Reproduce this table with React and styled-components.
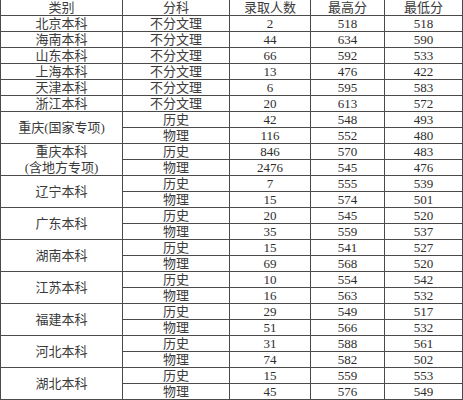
import React from 'react';
import styled, { createGlobalStyle } from 'styled-components';

const GlobalStyle = createGlobalStyle`
  html, body {
    margin: 0;
    padding: 0;
    background: #ffffff;
    overflow: hidden;
  }
`;

// lines are the grid background showing through 1px gaps
const Sheet = styled.div`
  display: grid;
  grid-template-columns: 121px 106px 80px 73px 77px;
  grid-template-rows: 15px;
  grid-auto-rows: 15px;
  gap: 1px;
  width: 461px;
  padding: 0 1px 1px 1px;
  background: #4a4a4a;
  font-family: "Liberation Serif", "Noto Sans CJK SC", serif;
  font-size: 13px;
`;

const Cell = styled.div`
  display: flex;
  flex-direction: column;
  align-items: center;
  justify-content: center;
  background: #ffffff;
  line-height: ${p => (p.$tall ? '16px' : '15px')};
  white-space: nowrap;
  color: ${p => (p.$num ? '#2e2e2e' : '#3a3a3a')};
  grid-row: ${p => (p.$span ? `span ${p.$span}` : 'auto')};
`;

const headers = ['类别', '分科', '录取人数', '最高分', '最低分'];

const singles = [
  ['北京本科', 2, 518, 518],
  ['海南本科', 44, 634, 590],
  ['山东本科', 66, 592, 533],
  ['上海本科', 13, 476, 422],
  ['天津本科', 6, 595, 583],
  ['浙江本科', 20, 613, 572],
];

// each group: [name lines, 历史 row, 物理 row]
const groups = [
  [['重庆(国家专项)'], [42, 548, 493], [116, 552, 480]],
  [['重庆本科', '(含地方专项)'], [846, 570, 483], [2476, 545, 476]],
  [['辽宁本科'], [7, 555, 539], [15, 574, 501]],
  [['广东本科'], [20, 545, 520], [35, 559, 537]],
  [['湖南本科'], [15, 541, 527], [69, 568, 520]],
  [['江苏本科'], [10, 554, 542], [16, 563, 532]],
  [['福建本科'], [29, 549, 517], [51, 566, 532]],
  [['河北本科'], [31, 588, 561], [74, 582, 502]],
  [['湖北本科'], [15, 559, 553], [45, 576, 549]],
];

const Numbers = ({ values }) =>
  values.map((v, i) => (
    <Cell key={i} $num>
      {v}
    </Cell>
  ));

export default function App() {
  return (
    <>
      <GlobalStyle />
      <Sheet>
        {headers.map(h => (
          <Cell key={h}>{h}</Cell>
        ))}
        {singles.map(([name, ...nums]) => (
          <React.Fragment key={name}>
            <Cell>{name}</Cell>
            <Cell>不分文理</Cell>
            <Numbers values={nums} />
          </React.Fragment>
        ))}
        {groups.map(([lines, hist, phys]) => (
          <React.Fragment key={lines.join('')}>
            <Cell $span={2} $tall>
              {lines.map((l, i) => (
                <span key={i}>{l}</span>
              ))}
            </Cell>
            <Cell>历史</Cell>
            <Numbers values={hist} />
            <Cell>物理</Cell>
            <Numbers values={phys} />
          </React.Fragment>
        ))}
      </Sheet>
    </>
  );
}
